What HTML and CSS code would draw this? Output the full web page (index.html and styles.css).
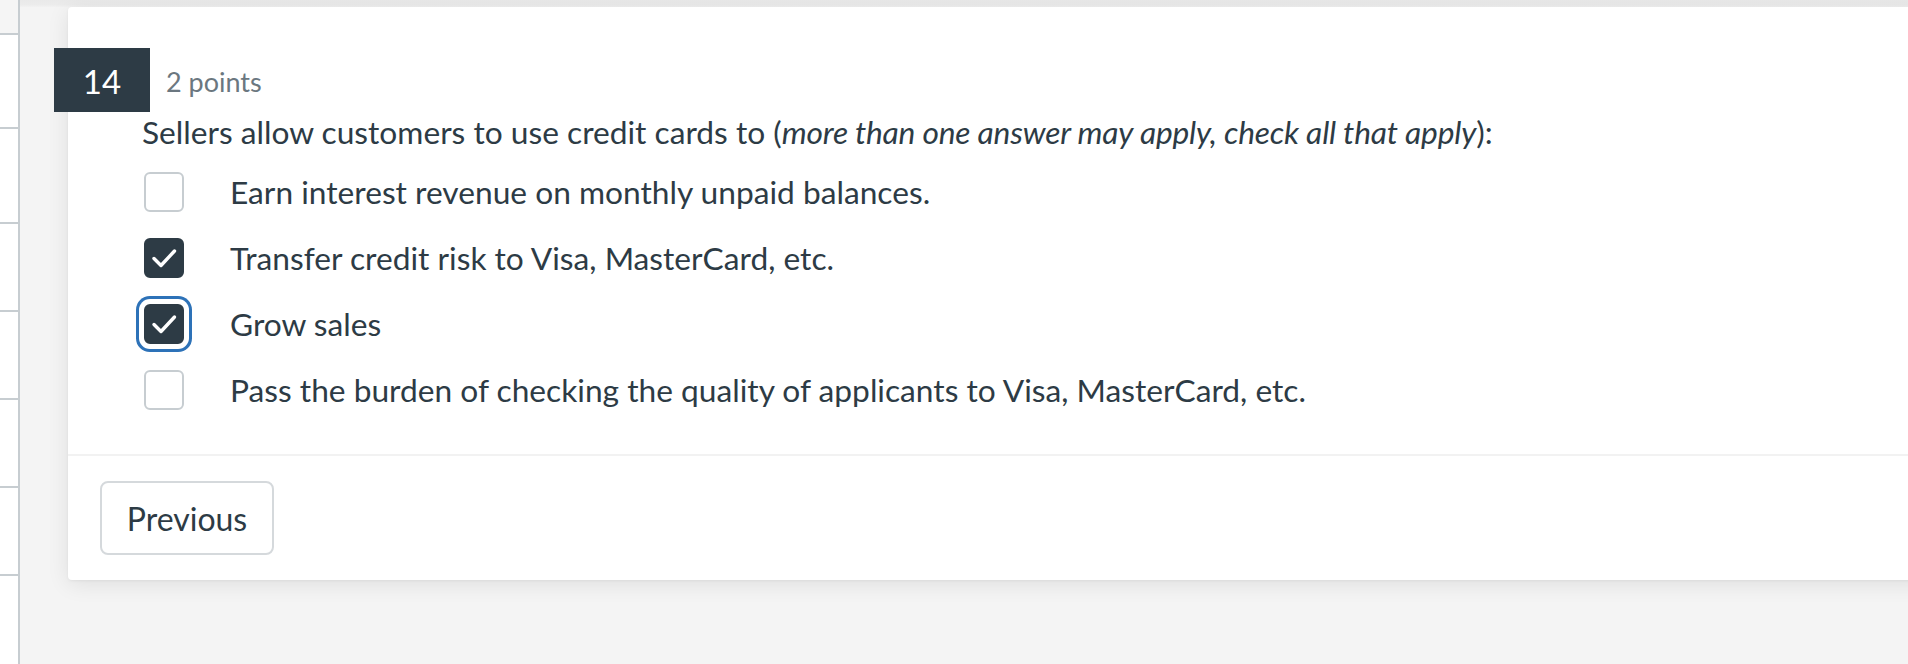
FILE: index.html
```html
<!DOCTYPE html>
<html lang="en">
<head>
<meta charset="utf-8">
<title>Quiz question 14</title>
<link rel="stylesheet" href="styles.css">
</head>
<body>
<div class="page">
  <aside class="side">
    <div class="side-item side-top"></div>
    <div class="side-item s1"></div>
    <div class="side-item s2"></div>
    <div class="side-item s3"></div>
    <div class="side-item s3"></div>
    <div class="side-item s3"></div>
    <div class="side-item s3"></div>
  </aside>
  <main class="main">
    <div class="prev-edge"></div>
    <section class="card">
      <div class="question">
        <header class="q-head">
          <span class="q-num">14</span>
          <span class="q-points">2 points</span>
        </header>
        <p class="q-text">Sellers allow customers to use credit cards to (<em>more than one answer may apply, check all that apply</em>):</p>
        <ul class="options">
          <li class="option">
            <span class="box"></span>
            <span class="label">Earn interest revenue on monthly unpaid balances.</span>
          </li>
          <li class="option">
            <span class="box checked"><svg viewBox="0 0 40 40" width="40" height="40"><path d="M10 20.5 L17 27.5 L30.5 13" fill="none" stroke="#fff" stroke-width="3.4" stroke-linecap="round" stroke-linejoin="round"/></svg></span>
            <span class="label">Transfer credit risk to Visa, MasterCard, etc.</span>
          </li>
          <li class="option">
            <span class="box checked focused"><svg viewBox="0 0 40 40" width="40" height="40"><path d="M10 20.5 L17 27.5 L30.5 13" fill="none" stroke="#fff" stroke-width="3.4" stroke-linecap="round" stroke-linejoin="round"/></svg></span>
            <span class="label">Grow sales</span>
          </li>
          <li class="option">
            <span class="box"></span>
            <span class="label">Pass the burden of checking the quality of applicants to Visa, MasterCard, etc.</span>
          </li>
        </ul>
      </div>
      <footer class="card-foot">
        <button class="btn" type="button">Previous</button>
      </footer>
    </section>
  </main>
</div>
</body>
</html>
```

FILE: styles.css
```css
* { box-sizing: border-box; }
html, body { margin: 0; padding: 0; }
body {
  background: #f4f4f4;
  font-family: Lato, "Open Sans", sans-serif;
  color: #2d3b45;
  height: 664px;
  overflow: hidden;
}
.page {
  display: flex;
  height: 664px;
}
.side {
  width: 20px;
  flex: none;
  border-right: 2px solid #c7cdd1;
  background: #fff;
  display: flex;
  flex-direction: column;
}
.side-item {
  border-bottom: 2px solid #c7cdd1;
  background: #fff;
}
.side-top { height: 35px; background: #f5f5f5; }
.s1 { height: 94px; }
.s2 { height: 95px; }
.s3 { height: 88px; }

.main {
  flex: 1;
  padding-left: 48px;
  display: flex;
  flex-direction: column;
  min-width: 0;
}
.prev-edge {
  height: 7px;
  margin-left: -48px;
  background: linear-gradient(#e9e9e9, #ececec 70%, #f2f2f2);
}
.card {
  background: #fff;
  border-radius: 4px 0 0 4px;
  box-shadow: 0 4px 22px rgba(0,0,0,0.09), 0 1px 3px rgba(0,0,0,0.05);
  width: 1860px;
}
.question {
  padding: 41px 0 44px 0;
}
.q-head {
  display: flex;
  align-items: center;
  margin-left: -14px;
  height: 64px;
}
.q-num {
  width: 96px;
  height: 64px;
  background: #2d3b45;
  color: #fff;
  font-size: 33px;
  display: flex;
  align-items: center;
  justify-content: center;
  padding-top: 1px;
}
.q-points {
  margin-left: 16px;
  font-size: 27px;
  color: #6b7780;
  padding-top: 2px;
}
.q-text {
  margin: 0 0 0 74px;
  font-size: 31.7px;
  line-height: 40px;
}
.q-text em {
  font-style: italic;
  letter-spacing: -0.17px;
}
.options {
  list-style: none;
  margin: 20px 0 0 0;
  padding: 0 0 0 76px;
  display: flex;
  flex-direction: column;
  gap: 26px;
}
.option {
  display: flex;
  align-items: center;
  height: 40px;
}
.box {
  width: 40px;
  height: 40px;
  flex: none;
  border: 2px solid #c7cdd1;
  border-radius: 6px;
  background: #fff;
  display: flex;
  align-items: center;
  justify-content: center;
}
.box svg { display: block; }
.box.checked {
  background: #2d3b45;
  border-color: #2d3b45;
}
.box.checked svg { margin: -2px; }
.box.focused {
  box-shadow: 0 0 0 5px #fff, 0 0 0 8px #2d72b8;
}
.label {
  margin-left: 46px;
  font-size: 31.7px;
  line-height: 40px;
}
.card-foot {
  border-top: 2px solid #f2f2f2;
  padding: 25px 32px 25px 32px;
  display: flex;
}
.btn {
  font-family: Lato, "Open Sans", sans-serif;
  font-size: 32px;
  color: #2d3b45;
  background: #fff;
  border: 2px solid #d5d9dc;
  border-radius: 8px;
  width: 174px;
  height: 74px;
  padding: 0;
  cursor: pointer;
}
```
